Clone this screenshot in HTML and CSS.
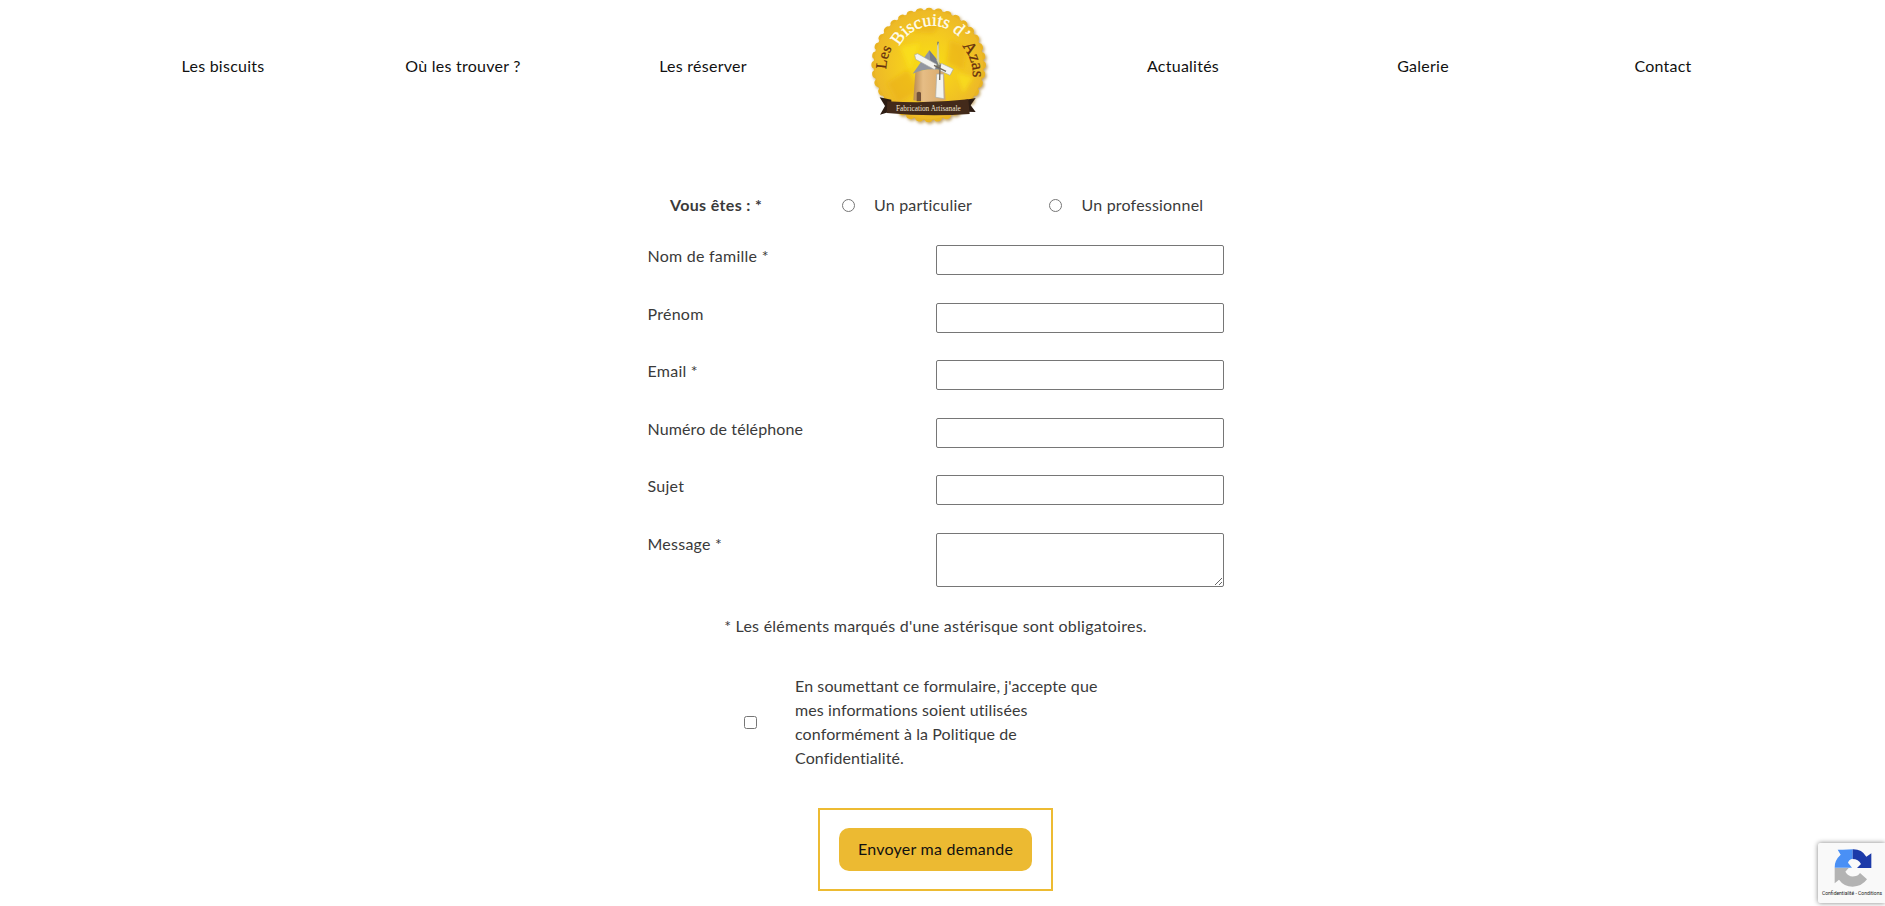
FILE: index.html
```html
<!DOCTYPE html>
<html lang="fr">
<head>
<meta charset="utf-8">
<title>Les Biscuits d'Azas</title>
<link rel="stylesheet" href="styles.css">
</head>
<body>
<nav class="nav">
  <a class="nav-link">Les biscuits</a>
  <a class="nav-link">Où les trouver ?</a>
  <a class="nav-link">Les réserver</a>
  <a class="nav-logo">
    <svg class="logo" viewBox="0 0 420 390">
      <defs>
        <radialGradient id="gold"><stop offset="0" stop-color="#f8df12"/><stop offset=".5" stop-color="#f5cd1e"/><stop offset="1" stop-color="#edb927"/></radialGradient>
        <linearGradient id="stone"><stop offset="0" stop-color="#b98b52"/><stop offset=".3" stop-color="#e6bd85"/><stop offset="1" stop-color="#d8a767"/></linearGradient>
        <filter id="shade" x="-10%" y="-10%" width="125%" height="125%"><feDropShadow dx="4" dy="5" stdDeviation="4" flood-color="#9a6a10" flood-opacity=".65"/></filter>
        <filter id="soft"><feGaussianBlur stdDeviation="7"/></filter>
        <path id="arcLes" d="M79 208A127 127 0 0 1 106 130"/>
        <path id="arcTitle" d="M118 139A112 112 0 0 1 326 160"/>
        <path id="arcAzas" d="M306 138A128 128 0 0 1 336 245"/>
      </defs>
      <g filter="url(#shade)">
        <circle cx="206" cy="195" r="165" fill="#e7b020"/>
        <circle class="scallop" cx="206" cy="195" r="160"/>
      </g>
      <circle cx="206" cy="194" r="163" fill="url(#gold)"/>
      <g filter="url(#soft)">
        <path d="M82 250l60-40 40 60-70 40zM270 120l50 20-10 70-50-20zM170 60l70 10-20 30-60-5z" fill="#e9ad19" opacity=".55"/>
        <path d="M120 140l60-10-30 80zM290 220l50 10-30 50z" fill="#fbe31e" opacity=".7"/>
      </g>
      <path d="M166 215L220 205L252 215L257 301Q210 312 160 301Z" fill="url(#stone)"/>
      <path d="M170 278q7-5 13 0v26h-13z" fill="#725038"/>
      <path d="M158 221L208 151L246 197L241 210Q200 203 158 221Z" fill="#9296a0"/>
      <path d="M208 151L213 205Q232 204 241 210L246 197Z" fill="#777c88"/>
      <path d="M235 202L234 125" stroke="#7f826e" stroke-width="5"/>
      <path d="M236 128L239 201L230 181L231 137Z" fill="#d9d5a4"/>
      <g class="sail">
        <path d="M164 164L173 161L230 193L224 209L167 178Z"/>
        <path d="M244 190L280 207L270 226L238 211Z"/>
        <path d="M230 222L250 222L252 296L227 292Z"/>
      </g>
      <path d="M222 196L258 214M240 195L239 240" stroke="#70685b" stroke-width="4"/>
      <path d="M59 292L94 299V334L60 344L75 318ZM347 294L314 300V335L347 336L332 316Z" fill="#2c1c13"/>
      <path d="M82 304Q205 312 325 298L329 342Q205 351 80 339Z" fill="#432a1a"/>
      <text class="logo-brown" font-size="46"><textPath href="#arcLes">Les</textPath></text>
      <text class="logo-white" font-size="53"><textPath href="#arcTitle">Biscuits d’</textPath></text>
      <text class="logo-brown" font-size="51"><textPath href="#arcAzas">Azas</textPath></text>
      <text class="logo-ribbon" x="108" y="332" textLength="194" lengthAdjust="spacingAndGlyphs">Fabrication Artisanale</text>
    </svg>
  </a>
  <a class="nav-link">Actualités</a>
  <a class="nav-link">Galerie</a>
  <a class="nav-link">Contact</a>
</nav>
<form class="form">
  <div class="kind">
    <strong class="kind-title">Vous êtes : *</strong>
    <label class="choice choice-first"><input class="radio" type="radio" name="kind">Un particulier</label>
    <label class="choice"><input class="radio" type="radio" name="kind">Un professionnel</label>
  </div>
  <div class="fields">
    <label class="row"><span>Nom de famille *</span><input class="field"></label>
    <label class="row"><span>Prénom</span><input class="field"></label>
    <label class="row"><span>Email *</span><input class="field"></label>
    <label class="row"><span class="tight">Numéro de téléphone</span><input class="field"></label>
    <label class="row"><span>Sujet</span><input class="field"></label>
    <label class="row"><span>Message *</span><textarea class="field area"></textarea></label>
  </div>
  <p class="note">* Les éléments marqués d'une astérisque sont obligatoires.</p>
  <label class="consent">
    <input class="check" type="checkbox">
    <span class="tight">En soumettant ce formulaire, j'accepte que<br>mes informations soient utilisées<br>conformément à la Politique de<br>Confidentialité.</span>
  </label>
  <div class="submit-frame"><button class="submit" type="button">Envoyer ma demande</button></div>
</form>
<aside class="captcha">
  <svg class="captcha-logo" viewBox="0 0 112 114">
    <path d="M55 1V29Q44 30 41 41L53 56H1Q0 34 19 17L10 2Q34 3 55 1Z" fill="#4a90f5"/>
    <path d="M55 1Q82 0 96 23L111 13V57H68L80 45Q72 30 55 30Z" fill="#1c3aa9"/>
    <path d="M1 57H43L33 68Q43 85 60 82Q70 82 77 72L98 91Q82 113 55 113Q29 113 14 92L1 103Z" fill="#b3b3b3"/>
  </svg>
  <span class="captcha-text">Confidentialité - Conditions</span>
</aside>
</body>
</html>
```
FILE: styles.css
```css
* { box-sizing: border-box; }
body {
  margin: 0;
  width: 1885px;
  height: 906px;
  overflow: hidden;
  background: #fff;
  color: #3a3a3a;
  font: 16px/24px Lato, "Noto Sans", sans-serif;
  letter-spacing: .25px;
}
.nav {
  display: grid;
  grid-template-columns: repeat(7, 240px);
  align-items: center;
  height: 134px;
  padding-left: 103px;
  color: #111;
}
.nav-link { padding-bottom: 2px; text-align: center; }
.nav-logo { height: 134px; padding-left: 37px; }
.logo { display: block; width: 140px; height: 130px; }
.scallop { fill: none; stroke: #e9b424; stroke-width: 24; stroke-linecap: round; stroke-dasharray: .1 27.82; }
.sail { fill: #f4f4f0; stroke: #a7aaa6; stroke-width: 2; }
.logo-brown { fill: #66310e; stroke: #66310e; stroke-width: .8; font-family: "Liberation Serif", serif; letter-spacing: 0; }
.logo-white { fill: #fffdf0; stroke: #fffdf0; stroke-width: 1; font-family: "Liberation Serif", serif; letter-spacing: 0; }
.logo-ribbon { fill: #efe4d2; font: 23px "Liberation Serif", serif; letter-spacing: 0; }
.form {
  display: flex;
  flex-direction: column;
  align-items: center;
  width: 1871px;
  padding-top: 59px;
}
.kind { display: flex; align-items: center; width: 576px; height: 24px; padding-left: 22.5px; }
.kind-title { width: 172.5px; letter-spacing: .35px; }
.choice { display: flex; align-items: center; letter-spacing: .2px; }
.choice-first { width: 207.5px; }
.radio { width: 13px; height: 13px; margin: 0 19.5px 0 -1px; }
.fields { display: flex; flex-direction: column; gap: 27.6px; width: 576px; margin-top: 28px; }
.row { display: grid; grid-template-columns: 288px 288px; align-items: start; height: 30px; }
.row > span { margin-top: -1px; }
.row:last-child { height: 54px; }
.field { display: block; width: 288px; height: 30px; margin: 0; border: 1px solid #767676; border-radius: 2px; background: #fff; }
.area { height: 54px; }
.tight { letter-spacing: .11px; }
.note { margin: 27px 0 0; }
.consent { display: flex; align-items: center; width: 384px; margin-top: 36px; }
.check { width: 13px; height: 13px; margin: 2px 38.5px 0 0; }
.submit-frame { margin-top: 38px; padding: 18px 19px; border: 2px solid #edbb32; }
.submit {
  display: block;
  width: 193px;
  height: 43px;
  padding: 0;
  border: 0;
  border-radius: 10px;
  background: #ecba32;
  color: #111;
  font: inherit;
  letter-spacing: inherit;
}
.captcha {
  position: absolute;
  right: 0;
  bottom: 3px;
  width: 67px;
  height: 60px;
  padding: 6px 0 0 4px;
  overflow: hidden;
  border-radius: 2px 0 0 2px;
  background: #f9f9f9;
  box-shadow: 0 0 5px gray;
}
.captcha-logo { display: block; width: 38px; height: 38px; margin-left: 12px; }
.captcha-text { display: block; margin-top: 2px; color: #222; font: 5px/8px Roboto, sans-serif; letter-spacing: 0; white-space: nowrap; }
```
